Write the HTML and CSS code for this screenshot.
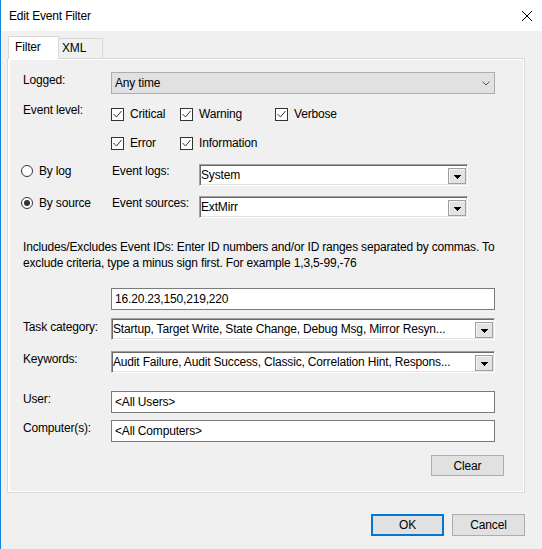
FILE: index.html
```html
<!DOCTYPE html>
<html>
<head>
<meta charset="utf-8">
<link rel="stylesheet" href="styles.css">
</head>
<body>
<div class="window">
  <div class="titlebar">
    <span class="title">Edit Event Filter</span>
    <svg class="close" width="10" height="10" viewBox="0 0 10 10"><path d="M0 0L10 10M10 0L0 10" stroke="#000" stroke-width="1" fill="none"/></svg>
  </div>
  <div class="tabs">
    <div class="tab tab-active">Filter</div>
    <div class="tab tab-xml">XML</div>
  </div>
  <div class="panel">
    <div class="field row-logged">
      <span class="lbl">Logged:</span>
      <div class="select"><span>Any time</span><svg class="chev" width="8" height="5" viewBox="0 0 8 5"><path d="M0.5 0.5L4 4L7.5 0.5" fill="none" stroke="#555"/></svg></div>
    </div>
    <div class="field row-level">
      <span class="lbl">Event level:</span>
      <div class="checks">
        <div class="check"><span class="box"><svg width="11" height="11" viewBox="0 0 11 11"><path d="M1.5 5L4.5 8L9.5 2" fill="none" stroke="#333"/></svg></span><span>Critical</span></div>
        <div class="check"><span class="box"><svg width="11" height="11" viewBox="0 0 11 11"><path d="M1.5 5L4.5 8L9.5 2" fill="none" stroke="#333"/></svg></span><span>Warning</span></div>
        <div class="check"><span class="box"><svg width="11" height="11" viewBox="0 0 11 11"><path d="M1.5 5L4.5 8L9.5 2" fill="none" stroke="#333"/></svg></span><span>Verbose</span></div>
        <div class="check"><span class="box"><svg width="11" height="11" viewBox="0 0 11 11"><path d="M1.5 5L4.5 8L9.5 2" fill="none" stroke="#333"/></svg></span><span>Error</span></div>
        <div class="check"><span class="box"><svg width="11" height="11" viewBox="0 0 11 11"><path d="M1.5 5L4.5 8L9.5 2" fill="none" stroke="#333"/></svg></span><span>Information</span></div>
      </div>
    </div>
    <div class="field row-bylog">
      <div class="radio-opt"><span class="radio"></span><span>By log</span></div>
      <span class="lbl2">Event logs:</span>
      <div class="combo combo-short"><span class="ctext">System</span><span class="dd"><svg width="7" height="4" viewBox="0 0 7 4"><path d="M0 0h7v1H0zM1 1h5v1H1zM2 2h3v1H2zM3 3h1v1H3z" fill="#000"/></svg></span></div>
    </div>
    <div class="field row-bysource">
      <div class="radio-opt"><span class="radio radio-on"></span><span>By source</span></div>
      <span class="lbl2">Event sources:</span>
      <div class="combo combo-short"><span class="ctext">ExtMirr</span><span class="dd"><svg width="7" height="4" viewBox="0 0 7 4"><path d="M0 0h7v1H0zM1 1h5v1H1zM2 2h3v1H2zM3 3h1v1H3z" fill="#000"/></svg></span></div>
    </div>
    <p class="desc">Includes/Excludes Event IDs: Enter ID numbers and/or ID ranges separated by commas. To exclude criteria, type a minus sign first. For example 1,3,5-99,-76</p>
    <div class="field row-ids">
      <div class="textbox">16.20.23,150,219,220</div>
    </div>
    <div class="field row-task">
      <span class="lbl lbl-task">Task category:</span>
      <div class="combo combo-long"><span class="ctext">Startup, Target Write, State Change, Debug Msg, Mirror Resyn...</span><span class="dd"><svg width="7" height="4" viewBox="0 0 7 4"><path d="M0 0h7v1H0zM1 1h5v1H1zM2 2h3v1H2zM3 3h1v1H3z" fill="#000"/></svg></span></div>
    </div>
    <div class="field row-keywords">
      <span class="lbl">Keywords:</span>
      <div class="combo combo-long"><span class="ctext">Audit Failure, Audit Success, Classic, Correlation Hint, Respons...</span><span class="dd"><svg width="7" height="4" viewBox="0 0 7 4"><path d="M0 0h7v1H0zM1 1h5v1H1zM2 2h3v1H2zM3 3h1v1H3z" fill="#000"/></svg></span></div>
    </div>
    <div class="field row-user">
      <span class="lbl">User:</span>
      <div class="textbox tb-field">&lt;All Users&gt;</div>
    </div>
    <div class="field row-computer">
      <span class="lbl">Computer(s):</span>
      <div class="textbox tb-field">&lt;All Computers&gt;</div>
    </div>
    <button class="btn btn-clear">Clear</button>
  </div>
  <div class="footer">
    <button class="btn btn-ok">OK</button>
    <button class="btn">Cancel</button>
  </div>
</div>
</body>
</html>
```

FILE: styles.css
```css
* { box-sizing: border-box; }
html, body { margin: 0; padding: 0; }
body {
  width: 542px;
  height: 549px;
  overflow: hidden;
  background: #f0f0f0;
  font-family: "Liberation Sans", Arial, sans-serif;
  font-size: 12px;
  letter-spacing: -0.17px;
  color: #000;
}
.window {
  height: 549px;
  border-left: 1px solid #1883d7;
  background: #f0f0f0;
}
.titlebar {
  height: 31px;
  background: #fff;
  display: flex;
  align-items: center;
  padding-left: 8px;
  padding-right: 10px;
}
.title { flex: 1; line-height: 16px; }
.close { display: block; }

.tabs {
  height: 27px;
  display: flex;
  align-items: flex-end;
  padding-left: 7px;
}
.tab {
  position: relative;
  border: 1px solid #d9d9d9;
  border-bottom: none;
  line-height: 16px;
}
.tab-active {
  width: 51px;
  height: 23px;
  background: #fff;
  z-index: 1;
  margin-bottom: -1px;
  padding: 2px 0 0 6px;
}
.tab-xml {
  width: 45px;
  height: 20px;
  margin-left: -1px;
  background: #f0f0f0;
  padding: 1px 0 0 3px;
}

.panel {
  margin-left: 6px;
  width: 518px;
  height: 435px;
  border: 1px solid #d9d9d9;
  box-shadow: inset 2px 0 #fff, inset 0 -1px #fff, inset 0 1px #fff, inset -1px 0 #fff;
  padding-left: 15px;
  display: flex;
  flex-direction: column;
}
.field { display: flex; align-items: flex-start; }
.lbl { width: 88px; flex: none; line-height: 16px; }

.row-logged { margin-top: 13px; }
.select {
  width: 384px;
  height: 22px;
  border: 1px solid #adadad;
  background: #e1e1e1;
  display: flex;
  align-items: center;
  justify-content: space-between;
  padding: 0 4px 0 3px;
}
.chev { display: block; }

.row-level { margin-top: 8px; }
.checks {
  padding-top: 6px;
  display: grid;
  grid-template-columns: 69px 95px auto;
  row-gap: 16px;
}
.check {
  display: flex;
  align-items: center;
  gap: 6px;
  height: 13px;
  line-height: 13px;
}
.box {
  width: 13px;
  height: 13px;
  border: 1px solid #333;
  background: #fff;
  flex: none;
}
.box svg { display: block; }

.row-bylog { margin-top: 14px; }
.row-bysource { margin-top: 10px; }
.radio-opt {
  width: 91px;
  margin-left: -2px;
  display: flex;
  align-items: center;
  gap: 6px;
  height: 14px;
  line-height: 14px;
  flex: none;
}
.radio {
  width: 12px;
  height: 12px;
  border: 1px solid #333;
  border-radius: 50%;
  background: #fff;
  display: flex;
  align-items: center;
  justify-content: center;
  flex: none;
}
.radio-on::after {
  content: "";
  width: 6px;
  height: 6px;
  border-radius: 50%;
  background: #333;
}
.lbl2 { width: 87px; flex: none; line-height: 14px; }

.combo {
  position: relative;
  height: 22px;
  background: #fff;
  border: 1px solid;
  border-color: #a0a0a0 #fff #fff #a0a0a0;
  box-shadow: inset 1px 1px 0 #696969, inset -1px -1px 0 #e3e3e3;
  display: flex;
  align-items: center;
  padding-left: 1px;
  flex: none;
}
.combo-short { width: 269px; }
.combo-long { width: 384px; }
.ctext { white-space: nowrap; overflow: hidden; line-height: 16px; }
.dd {
  position: absolute;
  right: 1px;
  bottom: 1px;
  width: 18px;
  height: 16px;
  border: 1px solid #a0a0a0;
  background: #e3e3e3;
  box-shadow: inset 1px 1px 0 #f4f4f4;
  display: flex;
  align-items: center;
  justify-content: center;
  padding-top: 1px;
}
.dd svg { display: block; }

.desc {
  margin: 21px 0 0 0;
  width: 482px;
  line-height: 16px;
}
.row-ids { margin-top: 17px; padding-left: 88px; }
.textbox {
  width: 384px;
  height: 22px;
  border: 1px solid #7a7a7a;
  background: #fff;
  padding-left: 3px;
  line-height: 20px;
  flex: none;
}
.row-task { margin-top: 8px; }
.lbl-task { margin-top: 1px; }
.row-keywords { margin-top: 11px; }
.row-user { margin-top: 18px; }
.row-computer { margin-top: 7px; }

.btn {
  font-family: inherit;
  font-size: 12px;
  letter-spacing: inherit;
  color: #000;
  width: 73px;
  height: 22px;
  border: 1px solid #adadad;
  background: #e1e1e1;
  padding: 0;
  margin: 0;
  line-height: 18px;
}
.btn-clear {
  align-self: flex-end;
  height: 21px;
  margin-top: 13px;
  margin-right: 20px;
}
.footer {
  margin-top: 21px;
  display: flex;
  justify-content: flex-end;
  gap: 8px;
  padding-right: 17px;
}
.btn-ok { border: 2px solid #0078d7; }
```
